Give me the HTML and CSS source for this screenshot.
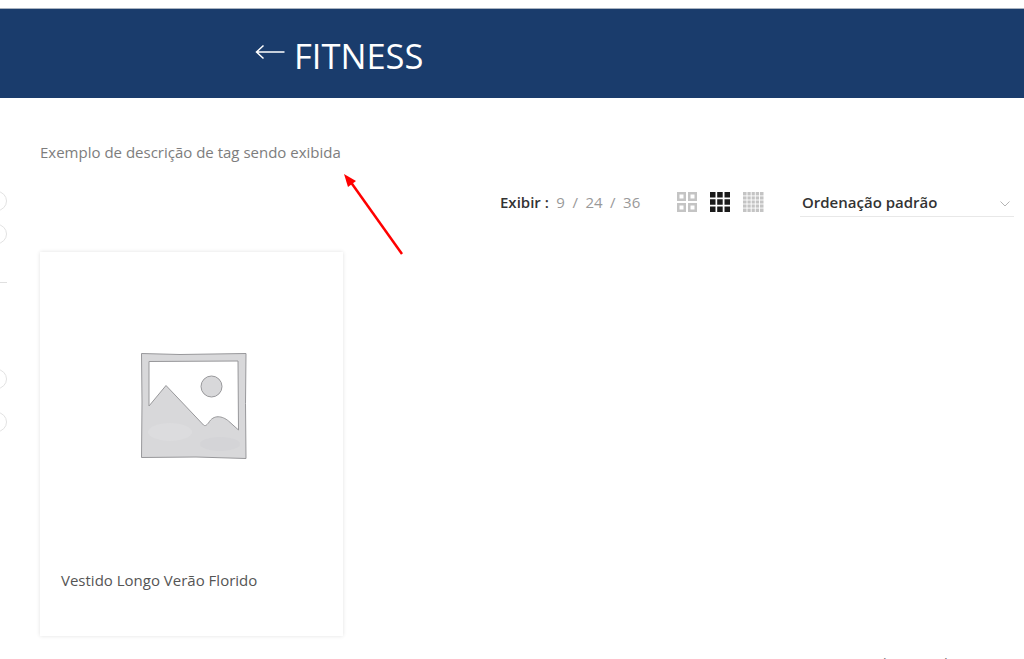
FILE: index.html
```html
<!DOCTYPE html>
<html lang="pt-BR">
<head>
<meta charset="utf-8">
<title>Fitness</title>
<link rel="stylesheet" href="styles.css">
</head>
<body>
<header class="hero">
  <div class="hero-title">
    <svg class="back" viewBox="0 0 30 16" width="30" height="16" aria-hidden="true"><path d="M29.500 8H1.500M8.500 1.500 1.500 8l7 6.500" fill="none" stroke="#fff" stroke-width="1.500"/></svg>
    <h1>FITNESS</h1>
  </div>
</header>
<div class="page">
  <aside class="sidebar">
    <span class="dot dot-first"></span>
    <span class="dot dot-second"></span>
    <span class="rule"></span>
    <span class="dot dot-third"></span>
    <span class="dot dot-fourth"></span>
  </aside>
  <main class="main">
    <p class="desc">Exemplo de descrição de tag sendo exibida</p>
    <div class="toolbar">
      <div class="per-page"><b>Exibir :</b><span>9</span><i>/</i><span>24</span><i>/</i><span>36</span></div>
      <div class="views">
        <svg class="view" width="20" height="20" viewBox="0 0 20 20" aria-hidden="true"><path d="M0 0h9v9H0zM2.500 2.500v4h4v-4zM11 0h9v9h-9zM13.500 2.500v4h4v-4zM0 11h9v9H0zM2.500 13.500v4h4v-4zM11 11h9v9h-9zM13.500 13.500v4h4v-4z" fill="#c4c4c4" fill-rule="evenodd"/></svg>
        <svg class="view" width="20" height="20" viewBox="0 0 20 20" aria-hidden="true"><path d="M0 0h5.500v5.500H0zM7.200 0h5.500v5.500H7.200zM14.500 0H20v5.500h-5.500zM0 7.200h5.500v5.500H0zM7.200 7.200h5.500v5.500H7.200zM14.500 7.200H20v5.500h-5.500zM0 14.500h5.500V20H0zM7.200 14.500h5.500V20H7.200zM14.500 14.500H20V20h-5.500z" fill="#1a1a1a"/></svg>
        <svg class="view" width="21" height="20" viewBox="0 0 21 20" aria-hidden="true"><path d="M0 0h20.500v20H0z" fill="#c4c4c4"/><path d="M4 0v20M8.200 0v20M12.300 0v20M16.500 0v20M0 3.900h21M0 8h21M0 12h21M0 16.100h21" stroke="#fff" stroke-width=".9"/></svg>
      </div>
      <div class="sort"><span>Ordenação padrão</span><svg width="10" height="6" viewBox="0 0 10 6" aria-hidden="true"><path d="M.5.500 5 5 9.500.500" fill="none" stroke="#b5b5b5"/></svg></div>
    </div>
    <article class="card">
      <div class="thumb">
        <svg width="108" height="108" viewBox="0 0 108 108" aria-hidden="true">
          <path d="M1.500 1.500 40 2.500 106 1.500l-.5 50 .5 55-50-1.500-54.500.500L2 50z" fill="#d8d8da" stroke="#98989b"/>
          <ellipse cx="30" cy="80" rx="22" ry="9" fill="#dcdcde"/>
          <ellipse cx="80" cy="92" rx="20" ry="7" fill="#d4d4d7"/>
          <path d="M9 9.500 98 9l.5 69-10-9c-6-5-15-7-20 2-2 2-3 3.500-5 2L36 44 26 33.500 9 54z" fill="#fff" stroke="#98989b" stroke-linejoin="round"/>
          <circle cx="71.500" cy="34.500" r="10.500" fill="#d8d8da" stroke="#98989b"/>
        </svg>
      </div>
      <h2>Vestido Longo Verão Florido</h2>
    </article>
    <div class="clipped">Adriana Wilson</div>
  </main>
  <svg class="arrow" width="62" height="84" viewBox="0 0 62 84" aria-hidden="true">
    <path d="M59 81 7 8" stroke="#f00" stroke-width="2.500" fill="none"/>
    <path d="M1 1 13 8 5 14z" fill="#f00"/>
  </svg>
</div>
</body>
</html>
```
FILE: styles.css
```css
* { box-sizing: border-box; }
html, body { margin: 0; height: 659px; overflow: hidden; background: #fff; }
body { padding-top: 8px; font-family: "Open Sans", sans-serif; color: #333; }

.hero { height: 90px; background: #1a3c6c; border-top: 1px solid #a9b3c0; display: flex; align-items: center; padding-left: 255px; }
.hero-title { display: flex; align-items: center; gap: 9px; color: #fff; padding-top: 5px; }
.back { margin-top: -9px; }
.hero-title h1 { margin: 0; font-size: 34.500px; font-weight: 400; line-height: 44px; }

.page { position: relative; display: flex; }

.sidebar { width: 7px; flex: none; overflow: hidden; display: flex; flex-direction: column; align-items: flex-end; padding-top: 93px; }
.dot { width: 20px; height: 20px; flex: none; border: 1px solid #e2e2e2; border-radius: 50%; background: #fff; }
.dot-second { margin-top: 13px; }
.rule { width: 7px; height: 1px; flex: none; margin-top: 38px; background: #e0e0e0; }
.dot-third { margin-top: 86px; }
.dot-fourth { margin-top: 23px; }

.main { width: 974px; margin-left: 33px; flex: none; }
.desc { margin: 44px 0 0; font-size: 15px; line-height: 20px; color: #7d7d7d; }

.toolbar { display: flex; align-items: center; height: 30px; margin-top: 25px; padding-left: 460px; }
.per-page { display: flex; align-items: center; gap: 7.500px; width: 177px; font-size: 15px; color: #999; }
.per-page b { font-weight: 600; color: #333; }
.per-page i { font-style: normal; }
.views { display: flex; gap: 13px; width: 123px; }
.sort { display: flex; align-items: center; justify-content: space-between; width: 214px; height: 30px; padding: 0 4px 0 2px; border-bottom: 1px solid #e8e8e8; font-size: 15px; font-weight: 600; color: #333; }
.sort svg { margin-top: 4px; }

.card { width: 303px; height: 384px; margin-top: 35px; background: #fff; box-shadow: 0 0 4px rgba(0, 0, 0, .12); }
.thumb { height: 304px; padding: 100px 0 0 100px; }
.thumb svg { display: block; }
.card h2 { margin: 14px 0 0 21px; font-size: 15px; font-weight: 400; line-height: 20px; color: #555; }

.clipped { margin: 17px 0 0 828px; font-size: 15px; line-height: 20px; color: #777; }

.arrow { position: absolute; left: 343px; top: 75px; }
```
